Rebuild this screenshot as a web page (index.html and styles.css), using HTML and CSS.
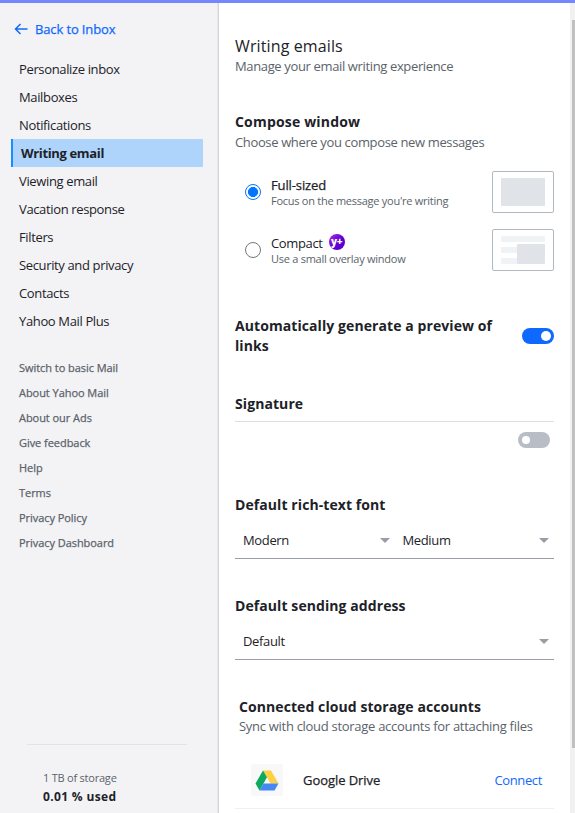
FILE: index.html
```html
<!DOCTYPE html>
<html lang="en">
<head>
<meta charset="utf-8">
<title>Writing emails</title>
<link rel="stylesheet" href="styles.css">
</head>
<body>
<div class="topbar"></div>
<div class="app">
  <aside class="sidebar">
    <a class="back"><svg width="14" height="12" viewBox="0 0 14 12" fill="none" stroke="#0f69ff" stroke-width="1.5"><path d="M13.500 6H1.500M6.500 1 1.500 6l5 5"/></svg><span>Back to Inbox</span></a>
    <nav class="nav">
      <a>Personalize inbox</a>
      <a>Mailboxes</a>
      <a>Notifications</a>
      <a class="active">Writing email</a>
      <a>Viewing email</a>
      <a>Vacation response</a>
      <a>Filters</a>
      <a>Security and privacy</a>
      <a>Contacts</a>
      <a>Yahoo Mail Plus</a>
    </nav>
    <div class="links">
      <a>Switch to basic Mail</a>
      <a>About Yahoo Mail</a>
      <a>About our Ads</a>
      <a>Give feedback</a>
      <a>Help</a>
      <a>Terms</a>
      <a>Privacy Policy</a>
      <a>Privacy Dashboard</a>
    </div>
    <div class="storage">
      <div class="total">1 TB of storage</div>
      <div class="used">0.01 % used</div>
    </div>
  </aside>
  <main class="content">
    <h1>Writing emails</h1>
    <p class="sub">Manage your email writing experience</p>

    <section class="compose">
      <h2>Compose window</h2>
      <p class="sub">Choose where you compose new messages</p>
      <div class="options">
        <div class="option">
          <span class="radio on"></span>
          <div class="label"><div class="name medium">Full-sized</div><div class="hint">Focus on the message you're writing</div></div>
          <svg width="62" height="42" viewBox="0 0 62 42"><rect x=".5" y=".5" width="61" height="41" rx="1.5" fill="#fff" stroke="#b0b9c1"/><rect x="9" y="7" width="44" height="28" rx="1" fill="#e0e4e9"/></svg>
        </div>
        <div class="option">
          <span class="radio"></span>
          <div class="label"><div class="name">Compact <span class="plus">y+</span></div><div class="hint">Use a small overlay window</div></div>
          <svg width="62" height="42" viewBox="0 0 62 42"><rect x=".5" y=".5" width="61" height="41" rx="1.5" fill="#fff" stroke="#b0b9c1"/><g fill="#f0f3f5"><rect x="9" y="7" width="44" height="6" rx="1"/><rect x="9" y="18" width="30" height="6" rx="1"/><rect x="9" y="29" width="30" height="6" rx="1"/></g><rect x="25" y="15" width="28" height="20" rx="1" fill="#e0e4e9"/></svg>
        </div>
      </div>
    </section>

    <section class="preview">
      <h2>Automatically generate a preview of links</h2>
      <span class="toggle on"></span>
    </section>

    <section class="signature">
      <h2>Signature</h2>
      <div class="sigrow"><span class="toggle"></span></div>
    </section>

    <section class="field">
      <h2>Default rich-text font</h2>
      <div class="selects">
        <div class="select">Modern</div>
        <div class="select">Medium</div>
      </div>
    </section>

    <section class="field">
      <h2>Default sending address</h2>
      <div class="selects"><div class="select">Default</div></div>
    </section>

    <section class="cloud">
      <h2>Connected cloud storage accounts</h2>
      <p class="sub">Sync with cloud storage accounts for attaching files</p>
      <div class="account">
        <span class="logo"><svg width="24" height="21" viewBox="0 0 24 21"><path d="M8 .5h8l7.500 13h-8z" fill="#ffd041"/><path d="M8 .5 12 7.300 4.500 20.500.5 13.500z" fill="#0da960"/><path d="M8.500 13.500h15l-4 7h-15z" fill="#4688f4"/></svg></span>
        <span class="provider">Google Drive</span>
        <a class="connect">Connect</a>
      </div>
    </section>
  </main>
  <div class="scrollbar"><div class="thumb"></div></div>
</div>
</body>
</html>
```
FILE: styles.css
```css
* { box-sizing: border-box; margin: 0; padding: 0; }
body {
  width: 575px;
  height: 813px;
  overflow: hidden;
  background: #fff;
  color: #1d2228;
  font-family: "Open Sans", "Noto Sans", sans-serif;
  font-size: 13px;
  line-height: 20px;
  letter-spacing: -0.36px;
}
.topbar { height: 3px; background: #7586ff; }
.app { display: flex; height: 810px; }

.sidebar {
  display: flex;
  flex-direction: column;
  width: 219px;
  padding: 16px 15px 7px 11px;
  background: #f3f3f6;
  border-right: 1px solid #d6d6da;
  box-shadow: inset -1px 0 0 #e8e8eb;
}
.back {
  display: flex;
  align-items: center;
  gap: 7px;
  height: 20px;
  padding-left: 3px;
  color: #0f69ff;
  letter-spacing: -0.13px;
  -webkit-text-stroke: 0.25px currentColor;
}
.nav { margin-top: 16px; }
.nav a { display: block; width: 192px; height: 28px; padding-left: 8px; line-height: 28px; }
.nav .active { background: #aed4fb; border-left: 2px solid #188fff; font-weight: 700; letter-spacing: -0.35px; }
.links { margin-top: 20px; padding-left: 8px; font-size: 11px; color: #5b636a; letter-spacing: -0.05px; -webkit-text-stroke: 0.25px currentColor; }
.links a { display: block; height: 25px; line-height: 25px; }
.storage { margin: auto 0 0 16px; width: 160px; padding: 24px 0 0 16px; border-top: 1px solid #e0e4e9; }
.total { height: 18px; font-size: 11px; line-height: 18px; color: #5b636a; letter-spacing: -0.22px; }
.used { height: 19px; font-size: 12px; line-height: 19px; font-weight: 700; letter-spacing: 0.35px; }

.content { width: 351px; padding: 33px 16px 0; }
h1 { height: 20px; font-size: 16px; font-weight: 400; letter-spacing: 0.12px; }
h2 { font-size: 14px; font-weight: 700; letter-spacing: 0.08px; }
.sub { height: 20px; color: #5b636a; white-space: nowrap; }
.compose { margin-top: 36px; }
.compose h2 { letter-spacing: 0.18px; }
.options { margin-top: 11px; padding-left: 10px; }
.option { display: flex; align-items: center; height: 58px; }
.radio { width: 16px; height: 16px; margin-right: 10px; border: 1px solid #767676; border-radius: 50%; background: #fff; }
.radio.on { border-color: #0075ff; background: radial-gradient(circle, #0075ff 4.700px, #fff 5.300px); }
.label { flex: 1; }
.name { display: flex; align-items: center; gap: 6px; height: 17px; line-height: 17px; padding-top: 2px; }
.medium { letter-spacing: -0.12px; -webkit-text-stroke: 0.25px currentColor; }
.hint { height: 16px; font-size: 11px; line-height: 16px; color: #5b636a; letter-spacing: -0.26px; }
.plus {
  width: 16px;
  height: 16px;
  margin-top: -2px;
  border-radius: 50%;
  background: linear-gradient(135deg, #a51fe0 10%, #5a00d2 55%);
  color: #fff;
  font-size: 10px;
  line-height: 14px;
  font-weight: 800;
  text-align: center;
}
.preview { display: flex; align-items: center; justify-content: space-between; margin-top: 37px; }
.preview h2 { width: 270px; }
.toggle { width: 32px; height: 16px; padding: 4px; border-radius: 8px; background: #b8bdc6; }
.toggle::before { content: ""; display: block; width: 8px; height: 8px; border-radius: 50%; background: #fff; }
.toggle.on { padding: 3px; background: #0f69ff; }
.toggle.on::before { width: 10px; height: 10px; margin-left: auto; }
.signature { margin-top: 38px; }
.signature h2 { padding-bottom: 7px; border-bottom: 1px solid #dcdfe3; }
.sigrow { display: flex; justify-content: flex-end; height: 36px; padding: 10px 4px 0; }
.field { margin-top: 37px; }
.selects { display: flex; height: 44px; border-bottom: 1px solid #979ea8; }
.select { display: flex; flex: 1; align-items: center; justify-content: space-between; height: 50px; padding: 0 5px 0 8px; }
.select::after { content: ""; border: 5px solid transparent; border-top-color: #979ea8; border-bottom: 0; }
.cloud { margin-top: 37px; }
.cloud h2, .cloud .sub { padding-left: 4px; }
.cloud .sub { margin-top: -1px; letter-spacing: -0.29px; }
.account { display: flex; align-items: center; height: 73px; padding: 16px 12px 0 16px; border-bottom: 1px solid #eef0f4; }
.logo { display: flex; align-items: center; justify-content: center; width: 32px; height: 32px; border-radius: 2px; background: #f8f8f8; }
.provider { flex: 1; margin-left: 20px; letter-spacing: -0.06px; -webkit-text-stroke: 0.25px currentColor; }
.connect { color: #0f69ff; letter-spacing: -0.36px; }

.scrollbar { width: 5px; padding: 17px 0 0 2px; background: #f1f1f1; }
.thumb { height: 728px; background: #c1c1c1; }
```
